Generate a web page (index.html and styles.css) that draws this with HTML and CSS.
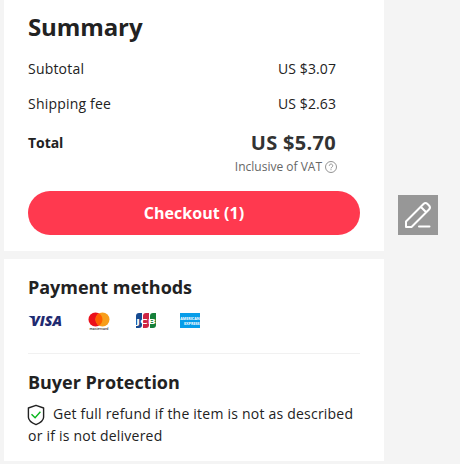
FILE: index.html
```html
<!DOCTYPE html>
<html lang="en">
<head>
<meta charset="utf-8">
<title>Summary</title>
<link rel="stylesheet" href="styles.css">
</head>
<body>
<main class="page">
  <div class="column">
    <section class="card summary">
      <h1 class="title">Summary</h1>
      <div class="row"><span class="label">Subtotal</span><span class="amount">US $3.07</span></div>
      <div class="row"><span class="label">Shipping fee</span><span class="amount">US $2.63</span></div>
      <div class="row total"><span class="total-label">Total</span><span class="total-amount">US $5.70</span></div>
      <div class="vat"><span class="vat-text">Inclusive of VAT</span>
        <svg class="help" viewBox="0 0 12 12" fill="none" stroke="#888" stroke-width=".9"><circle cx="6" cy="6" r="5.5"/><path d="M4.300 4.800a1.700 1.700 0 1 1 2.700 1.300c-.7.4-1 .7-1 1.300M6 8.200v1"/></svg>
      </div>
      <button class="checkout">Checkout (1)</button>
    </section>
    <section class="card benefits">
      <h2 class="heading pay">Payment methods</h2>
      <div class="methods">
        <svg class="method" viewBox="0 0 34 24"><text x="3" y="17" textLength="31" lengthAdjust="spacingAndGlyphs" class="visa">VISA</text><path fill="#1f2a70" d="M0.500 7h4l2 4z"/></svg>
        <svg class="method mc" viewBox="0 0 22 24"><circle cx="7.5" cy="10.5" r="7" fill="#eb101b"/><circle cx="14.5" cy="10.5" r="7" fill="#f79e1b"/><path fill="#ff5f00" d="M11 4.450a7 7 0 0 1 0 12.100 7 7 0 0 1 0-12.100z"/><text x="1.5" y="20.8" textLength="19" lengthAdjust="spacingAndGlyphs" class="mc-text">mastercard</text></svg>
        <svg class="method jcb" viewBox="0 0 22 24"><path fill="#174b91" d="M1 7q0-3 3-3h3v12q0 3-3 3H1z"/><path fill="#ce2544" d="M8 7q0-3 3-3h3v12q0 3-3 3H8z"/><path fill="#16803a" d="M15 7q0-3 3-3h3v12q0 3-3 3h-3z"/><text x="1" y="14.5" textLength="20" lengthAdjust="spacingAndGlyphs" class="jcb-text">JCB</text></svg>
        <svg class="method amex" viewBox="0 0 22 24"><path fill="#079de9" d="M1 4h20v15H1z"/><text x="1.2" y="11" textLength="19.500" lengthAdjust="spacingAndGlyphs" class="amex-text">AMERICAN</text><text x="5" y="15.5" textLength="15.700" lengthAdjust="spacingAndGlyphs" class="amex-text">EXPRESS</text></svg>
      </div>
      <h2 class="heading protect">Buyer Protection</h2>
      <p class="refund"><svg class="shield" viewBox="0 0 18 22" fill="none"><path stroke="#222" stroke-width="1.4" stroke-linejoin="round" d="M9 1.300 16.600 4v9.200c0 3.200-3.200 5.500-7.600 7.400-4.400-1.900-7.600-4.200-7.600-7.400V4z"/><path stroke="#09b51c" stroke-width="1.4" d="m4.500 10.200 3.600 3.600 5.300-6"/></svg>Get full refund if the item is not as described<br>or if is not delivered</p>
    </section>
  </div>
  <button class="edit" aria-label="Edit"><svg viewBox="0 0 40 40" fill="none" stroke="#fff" stroke-width="2" stroke-linejoin="round" stroke-linecap="round"><path d="M8 32v-5.500L25.500 9q2-2 4 0l1.500 1.500q2 2 0 4L13.500 32zM22.700 11.800l5.500 5.500M21 31.500h10.500"/></svg></button>
</main>
</body>
</html>
```
FILE: styles.css
```css
* { box-sizing: border-box; }
body {
  margin: 0;
  background: #f4f4f4;
  color: #222;
  font: 14px/20px "Open Sans", "Noto Sans", sans-serif;
}
.page { display: flex; height: 464px; padding-left: 4px; gap: 14px; align-items: flex-start; overflow: hidden; }
.column { width: 380px; display: flex; flex-direction: column; gap: 8px; }
.card { background: #fff; padding: 0 24px; }
.summary { height: 251px; }
.title { margin: 0; padding-top: 10px; height: 59px; font-size: 24px; line-height: 34px; font-weight: 700; letter-spacing: -.1px; }
.row { display: flex; justify-content: space-between; align-items: center; height: 20px; margin-bottom: 15px; padding-right: 24px; }
.label { letter-spacing: .2px; }
.amount { letter-spacing: .1px; }
.total { height: 28px; margin: 0; }
.total-label { font-weight: 700; letter-spacing: -.05px; }
.total-amount { font-size: 20px; font-weight: 700; color: #333; letter-spacing: .3px; }
.vat { display: flex; justify-content: flex-end; align-items: center; height: 18px; gap: 3px; padding: 2px 23px 0 0; font-size: 12px; color: #666; }
.help { width: 12px; height: 12px; margin-top: -1px; }
.checkout { display: block; width: 332px; height: 44px; margin-top: 16px; padding: 0; border: 0; border-radius: 22px; background: #ff394f; color: #fff; font: 700 16px/44px "Open Sans", sans-serif; letter-spacing: .05px; }
.benefits { height: 202px; padding-top: 16px; }
.heading { margin: 0; font-size: 18px; line-height: 24px; font-weight: 700; letter-spacing: -.03px; }
.methods { display: flex; height: 55px; padding-top: 10px; border-bottom: 1px solid #f1f1f1; }
.method { width: 34px; height: 24px; overflow: visible; }
.mc { width: 22px; margin-left: 26px; }
.jcb { width: 22px; margin-left: 25px; }
.amex { width: 22px; margin-left: 22px; }
.visa { font: italic 800 14px "Open Sans", sans-serif; fill: #1f2a70; }
.mc-text { font: 600 4px "Open Sans", sans-serif; fill: #222; }
.jcb-text { font: 700 7.500px "Open Sans", sans-serif; fill: #fff; }
.amex-text { font: 700 4px "Open Sans", sans-serif; fill: #fff; }
.protect { margin-top: 16px; }
.refund { margin: 9px 0 0; line-height: 22px; white-space: nowrap; font-weight: 450; letter-spacing: .22px; }
.shield { width: 18px; height: 22px; margin: 0 8px 0 -1px; vertical-align: top; position: relative; top: 1px; }
.edit { width: 40px; height: 40px; margin-top: 195px; padding: 0; border: 0; background: #979797; }
.edit svg { display: block; width: 40px; height: 40px; }
```
